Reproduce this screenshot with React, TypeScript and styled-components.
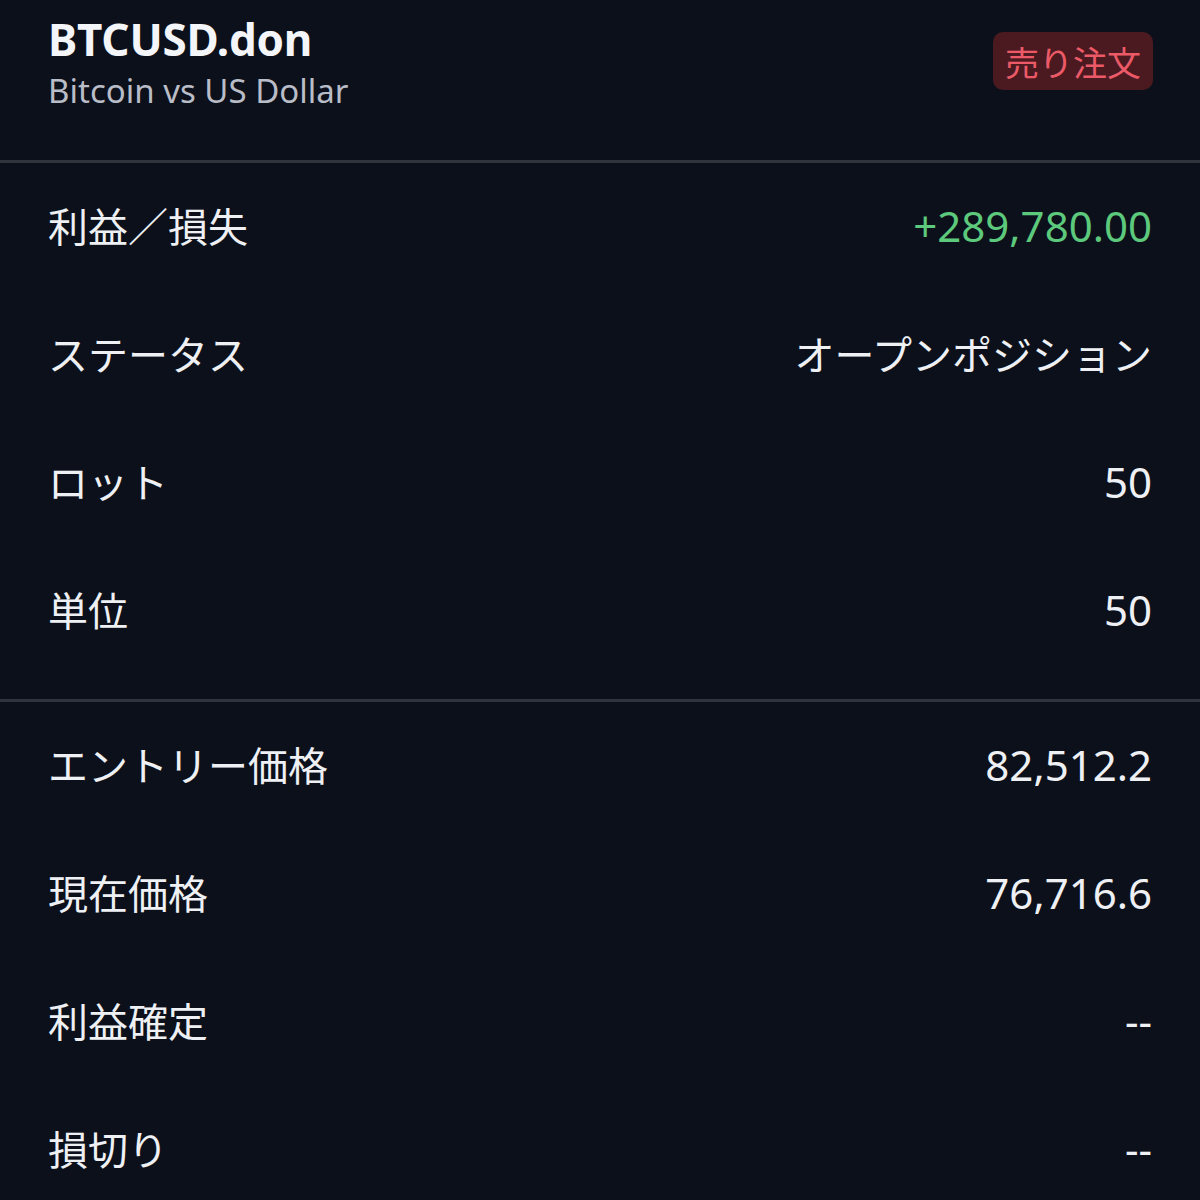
import React from 'react';
import styled, { createGlobalStyle } from 'styled-components';

const GlobalStyle = createGlobalStyle`
  html, body {
    margin: 0;
    padding: 0;
    background: #0c101b;
  }
  body {
    font-family: "Noto Sans", "Noto Sans CJK JP", sans-serif;
    -webkit-font-smoothing: antialiased;
  }
`;

const Screen = styled.div`
  width: 1200px;
  height: 1200px;
  overflow: hidden;
  background: #0c101b;
  color: #eef0f4;
`;

const Header = styled.div`
  display: flex;
  justify-content: space-between;
  align-items: flex-start;
  height: 160px;
  padding: 0 47px 0 48px;
  box-sizing: border-box;
`;

const TitleBlock = styled.div`
  display: flex;
  flex-direction: column;
  padding-top: 12px;
`;

const Symbol = styled.div`
  font-size: 44px;
  font-weight: 700;
  line-height: 54px;
  color: #f4f5f8;
  letter-spacing: -0.2px;
`;

const Name = styled.div`
  font-size: 33px;
  line-height: 50px;
  color: #b9bdc7;
`;

const SideBadge = styled.div`
  margin-top: 32px;
  height: 58px;
  padding: 0 12px;
  display: flex;
  align-items: center;
  border-radius: 10px;
  background: #4b1a21;
  color: #ec5a68;
  font-size: 34px;
  font-family: "Noto Sans CJK JP", sans-serif;
`;

const Divider = styled.div`
  height: 3px;
  background: #30343d;
`;

const Section = styled.div<{ $bottom?: number }>`
  display: flex;
  flex-direction: column;
  padding-top: 2px;
  padding-bottom: ${p => p.$bottom ?? 0}px;
`;

const Row = styled.div`
  display: flex;
  justify-content: space-between;
  align-items: center;
  height: 128px;
  box-sizing: border-box;
  padding: 0 48px 8px;
`;

const Label = styled.span`
  font-family: "Noto Sans CJK JP", sans-serif;
  font-size: 40px;
  color: #eef0f4;
`;

const Value = styled.span<{ $tone?: string; $jp?: boolean }>`
  font-size: ${p => (p.$jp ? 40 : 42)}px;
  color: ${p => (p.$tone === 'up' ? '#5cc97c' : '#eef0f4')};
  font-family: ${p =>
    p.$jp ? '"Noto Sans CJK JP", sans-serif' : '"Noto Sans", "Noto Sans CJK JP", sans-serif'};
`;

const position = [
  { label: '利益／損失', value: '+289,780.00', tone: 'up' },
  { label: 'ステータス', value: 'オープンポジション', jp: true },
  { label: 'ロット', value: '50' },
  { label: '単位', value: '50' },
];

const prices = [
  { label: 'エントリー価格', value: '82,512.2' },
  { label: '現在価格', value: '76,716.6' },
  { label: '利益確定', value: '--' },
  { label: '損切り', value: '--' },
];

export default function App() {
  return (
    <>
      <GlobalStyle />
      <Screen>
        <Header>
          <TitleBlock>
            <Symbol>BTCUSD.don</Symbol>
            <Name>Bitcoin vs US Dollar</Name>
          </TitleBlock>
          <SideBadge>売り注文</SideBadge>
        </Header>
        <Divider />
        <Section $bottom={22}>
          {position.map(r => (
            <Row key={r.label}>
              <Label>{r.label}</Label>
              <Value $tone={r.tone} $jp={r.jp}>{r.value}</Value>
            </Row>
          ))}
        </Section>
        <Divider />
        <Section>
          {prices.map(r => (
            <Row key={r.label}>
              <Label>{r.label}</Label>
              <Value>{r.value}</Value>
            </Row>
          ))}
        </Section>
      </Screen>
    </>
  );
}
